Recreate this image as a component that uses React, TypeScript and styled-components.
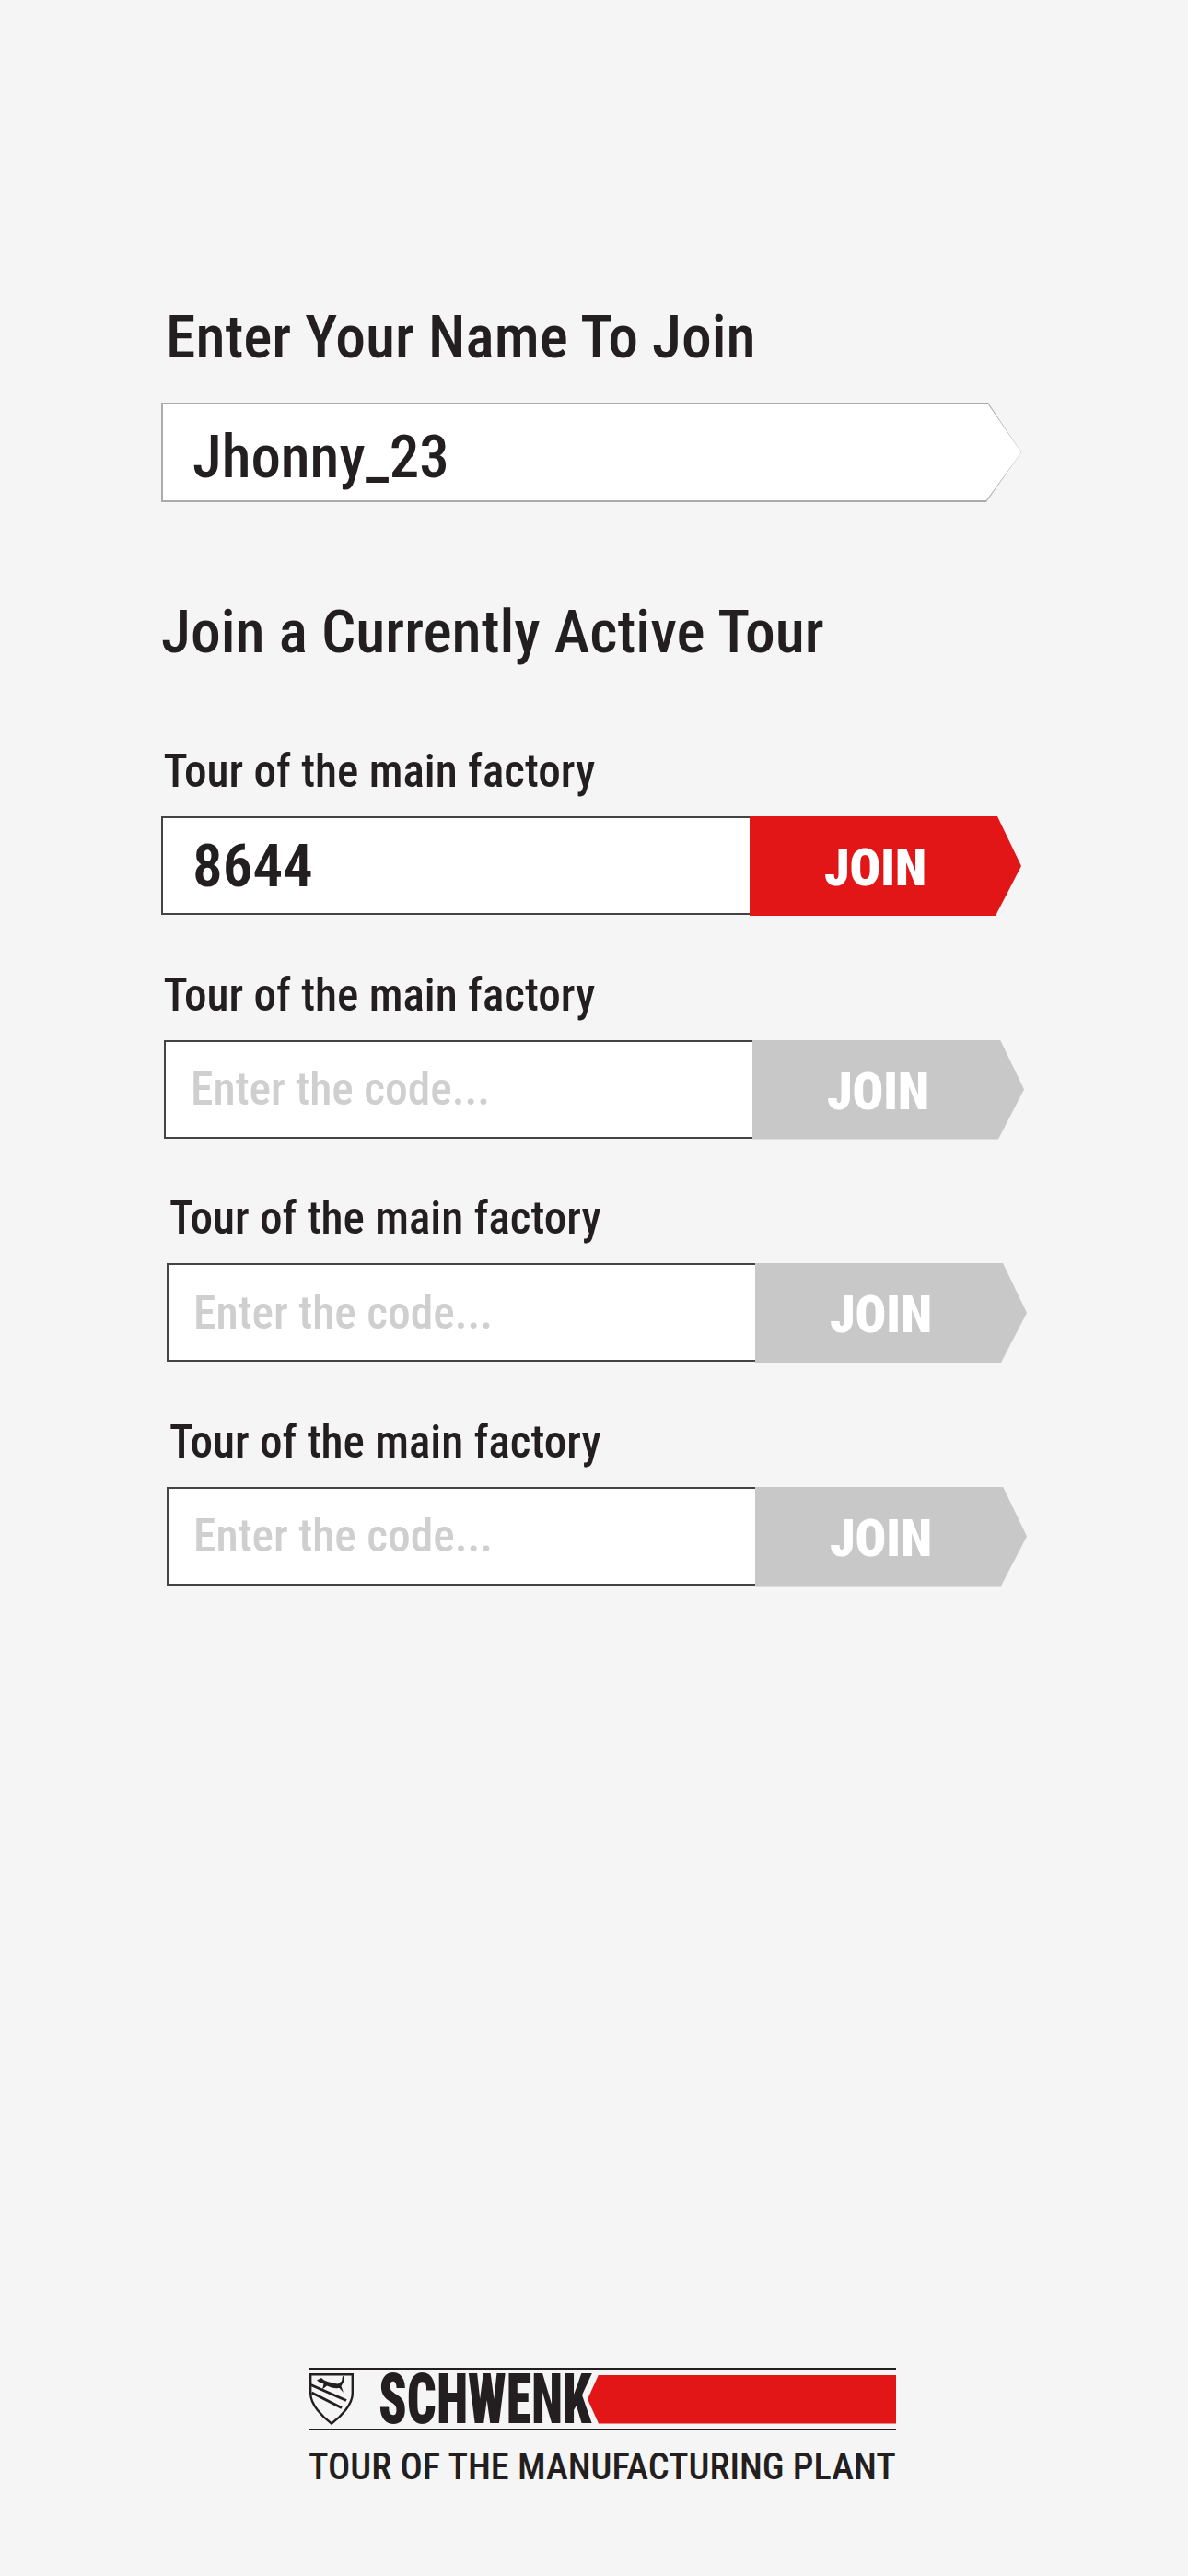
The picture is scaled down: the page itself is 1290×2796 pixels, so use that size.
import React from "react";
import styled, { createGlobalStyle } from "styled-components";

const GlobalStyle = createGlobalStyle`
  html, body {
    margin: 0;
    padding: 0;
    background: #f5f5f5;
  }

  * {
    box-sizing: border-box;
  }
`;

const INK = "#231f20";
const RED = "#e31617";
const GREY = "#c8c8c8";
const FONT = `Roboto, "Noto Sans", sans-serif`;

const tours = [
  { id: 1, code: "8644", labelLeft: 2.5, boxLeft: 0, active: true },
  { id: 2, code: "", labelLeft: 2.5, boxLeft: 3, active: false },
  { id: 3, code: "", labelLeft: 9, boxLeft: 6, active: false },
  { id: 4, code: "", labelLeft: 9, boxLeft: 6, active: false },
];

export default function App(): JSX.Element {
  return (
    <Page>
      <GlobalStyle />
      <Form>
        <NameHeading>Enter Your Name To Join</NameHeading>
        <NameField>
          <NameInput defaultValue="Jhonny_23" aria-label="Your name" />
        </NameField>

        <ToursHeading>Join a Currently Active Tour</ToursHeading>
        <TourList>
          {tours.map((tour) => (
            <TourRow key={tour.id}>
              <TourLabel $left={tour.labelLeft}>Tour of the main factory</TourLabel>
              <CodeRow $left={tour.boxLeft}>
                <CodeInput
                  $filled={tour.code !== ""}
                  defaultValue={tour.code}
                  placeholder="Enter the code..."
                  aria-label="Tour code"
                />
                <JoinButton $active={tour.active}>JOIN</JoinButton>
              </CodeRow>
            </TourRow>
          ))}
        </TourList>
      </Form>

      <Footer>
        <LogoBar>
          <Shield viewBox="0 0 48 56" aria-hidden="true">
            <path
              d="M1.2 1.2H46.8V22C46.8 34 34 47 24 54.5C14 47 1.2 34 1.2 22Z"
              fill="none"
              stroke={INK}
              strokeWidth="2.4"
            />
            <path
              d="M8 7.5L13 5L16 7.5C21 9.5 26 11 31 11.5L35 8.5L36 3L37.5 3.5L37 9.5L34.5 14L37 21L32.5 16C27 16.5 23 15.5 19 13.5L14 17.5L15.5 11.5L10.5 9.5Z"
              fill={INK}
            />
            <path d="M1.5 12.5L40 29.5" stroke={INK} strokeWidth="3" />
            <path d="M2.5 21L35 37.5" stroke={INK} strokeWidth="3" />
          </Shield>
          <Wordmark>SCHWENK</Wordmark>
          <RedBand />
        </LogoBar>
        <Tagline>TOUR OF THE MANUFACTURING PLANT</Tagline>
      </Footer>
    </Page>
  );
}

const Page = styled.div`
  display: flex;
  flex-direction: column;
  width: 1290px;
  height: 2796px;
  padding: 331px 0 94px;
  overflow: hidden;

  background: #f5f5f5;
  color: ${INK};
  font-family: ${FONT};
  font-stretch: 75%;
`;

const Form = styled.main`
  display: flex;
  flex-direction: column;
  padding-left: 175px;
`;

const NameHeading = styled.h1`
  margin: 0 0 36px 5px;

  font-size: 65.6px;
  font-weight: 500;
  line-height: 70px;
`;

const NameField = styled.div`
  width: 934px;
  height: 108px;
  padding: 2px 0 2px 2px;

  background: #ababab;
  clip-path: polygon(0 0, 898px 0, 100% 50%, 896px 100%, 0 100%);
`;

const NameInput = styled.input`
  display: block;
  width: 100%;
  height: 100%;
  padding: 9px 0 0 32px;
  border: 0;
  outline: none;

  background: #fff;
  clip-path: polygon(0 0, 896px 0, 100% 50%, 894px 100%, 0 100%);

  color: ${INK};
  font-family: ${FONT};
  font-size: 65px;
  font-stretch: 75%;
  font-weight: 500;
`;

const ToursHeading = styled.h2`
  margin: 106px 0 88px;

  font-size: 65.6px;
  font-weight: 500;
  line-height: 70px;
`;

const TourList = styled.div`
  display: flex;
  flex-direction: column;
  gap: 57.5px;
`;

const TourRow = styled.section`
  display: flex;
  flex-direction: column;
  gap: 21px;
`;

const TourLabel = styled.h3<{ $left: number }>`
  margin: 0 0 0 ${({ $left }) => $left}px;

  font-size: 49.2px;
  font-weight: 500;
  line-height: 56px;
`;

const CodeRow = styled.div<{ $left: number }>`
  display: flex;
  width: 934px;
  height: 108px;
  margin-left: ${({ $left }) => $left}px;
`;

const CodeInput = styled.input<{ $filled: boolean }>`
  width: 639px;
  height: 107px;
  padding: 0 0 0 ${({ $filled }) => ($filled ? 32 : 27)}px;
  border: 2px solid #444;
  border-right: 0;
  outline: none;

  background: #fff;

  color: ${INK};
  font-family: ${FONT};
  font-size: ${({ $filled }) => ($filled ? 65 : 49.5)}px;
  font-stretch: 75%;
  font-weight: ${({ $filled }) => ($filled ? 600 : 500)};

  &::placeholder {
    color: #cfcfcf;
    opacity: 1;
  }
`;

const JoinButton = styled.button<{ $active: boolean }>`
  flex: 1;
  height: 108px;
  padding: 4px 22px 0 0;
  border: 0;

  background: ${({ $active }) => ($active ? RED : GREY)};
  clip-path: polygon(0 0, 269px 0, 100% 50%, 267px 100%, 0 100%);

  color: #fff;
  font-family: ${FONT};
  font-size: 56px;
  font-stretch: 75%;
  font-weight: 900;
`;

const Footer = styled.footer`
  display: flex;
  flex-direction: column;
  gap: 16px;
  width: 637px;
  margin: auto 0 0 336px;
`;

const LogoBar = styled.div`
  display: flex;
  align-items: center;
  height: 68px;
  border-top: 2px solid ${INK};
  border-bottom: 2px solid ${INK};
`;

const Shield = styled.svg`
  flex: none;
  width: 48px;
  height: 56px;
  margin-right: 27px;
`;

const Wordmark = styled.span`
  flex: none;
  width: 227px;

  font-size: 76px;
  font-weight: 900;
  line-height: 64px;
  white-space: nowrap;
  transform: scaleX(0.737);
  transform-origin: left center;
`;

const RedBand = styled.div`
  flex: 1;
  height: 53px;

  background: ${RED};
  clip-path: polygon(12px 0, 100% 0, 100% 100%, 12px 100%, 0 50%);
`;

const Tagline = styled.div`
  margin-left: -1px;

  font-size: 40.4px;
  font-weight: 500;
  line-height: 48px;
  white-space: nowrap;
`;
